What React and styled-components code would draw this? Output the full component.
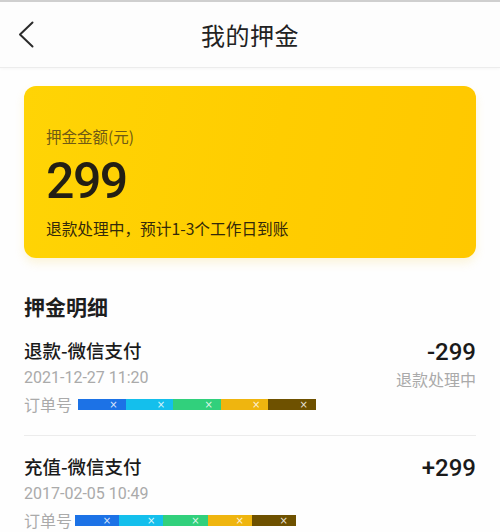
import React from 'react';
import styled, { createGlobalStyle } from 'styled-components';

const records = [
  {
    title: '退款-微信支付',
    amount: '-299',
    time: '2021-12-27 11:20',
    status: '退款处理中',
    segment: 47.6,
    barGap: 6,
  },
  {
    title: '充值-微信支付',
    amount: '+299',
    time: '2017-02-05 10:49',
    status: '',
    segment: 44.2,
    barGap: 3,
  },
];

const maskColors = ['#1c72e6', '#14bfec', '#31d07c', '#efb50f', '#6e5100'];

function MaskedOrder({ segment, gap }) {
  return (
    <Mask $gap={gap}>
      {maskColors.map(color => (
        <MaskPart key={color} $color={color} $width={segment}>
          ×
        </MaskPart>
      ))}
    </Mask>
  );
}

function App() {
  return (
    <Page>
      <GlobalStyle />
      <Header>
        <BackButton aria-label="返回">
          <svg width="16" height="27" viewBox="0 0 16 27" fill="none">
            <polyline
              points="14.5,1.5 2,13.5 14.5,25.5"
              stroke="#2b2b2b"
              strokeWidth="2"
              strokeLinecap="round"
              strokeLinejoin="round"
            />
          </svg>
        </BackButton>
        <Title>我的押金</Title>
      </Header>

      <Card>
        <CardLabel>押金金额(元)</CardLabel>
        <CardAmount>299</CardAmount>
        <CardNote>退款处理中，预计1-3个工作日到账</CardNote>
      </Card>

      <Section>
        <SectionTitle>押金明细</SectionTitle>
        {records.map((record, i) => (
          <Row key={record.time} $last={i === records.length - 1}>
            <RowMain>
              <RowTitle>{record.title}</RowTitle>
              <RowTime>{record.time}</RowTime>
              <OrderLine>
                订单号
                <MaskedOrder segment={record.segment} gap={record.barGap} />
              </OrderLine>
            </RowMain>
            <RowSide>
              <RowAmount>{record.amount}</RowAmount>
              {record.status && <RowStatus>{record.status}</RowStatus>}
            </RowSide>
          </Row>
        ))}
      </Section>
    </Page>
  );
}

const GlobalStyle = createGlobalStyle`
  html, body {
    margin: 0;
    padding: 0;
    background: #fefefe;
  }
  body {
    font-family: Roboto, "Noto Sans CJK SC", "Noto Sans", sans-serif;
    color: #222;
  }
`;

const Page = styled.div`
  width: 500px;
  height: 532px;
  overflow: hidden;
  background: #fefefe;
  border-top: 2px solid #cfcfcf;
  box-sizing: border-box;
`;

const Header = styled.div`
  position: relative;
  height: 65px;
  display: flex;
  align-items: center;
  justify-content: center;
  background: #fdfdfd;
  border-bottom: 1px solid #ececec;
  box-shadow: 0 1px 3px rgba(0, 0, 0, 0.03);
`;

const BackButton = styled.div`
  position: absolute;
  left: 18px;
  top: 19px;
  display: flex;
`;

const Title = styled.div`
  font-family: "Noto Sans CJK SC", sans-serif;
  font-size: 24px;
  line-height: 32px;
  color: #222;
  letter-spacing: 0.5px;
`;

const Card = styled.div`
  margin: 18px 24px 0;
  height: 172px;
  box-sizing: border-box;
  padding: 38px 22px 0;
  border-radius: 12px;
  background: linear-gradient(100deg, #ffd405 0%, #ffcd00 55%, #ffc800 100%);
  box-shadow: 0 5px 10px rgba(240, 200, 60, 0.18);
`;

const CardLabel = styled.div`
  font-family: "Noto Sans CJK SC", sans-serif;
  font-size: 15.5px;
  line-height: 24px;
  color: #6f5a14;
`;

const CardAmount = styled.div`
  font-family: Roboto, sans-serif;
  font-size: 50px;
  font-weight: 500;
  line-height: 54px;
  letter-spacing: -1.5px;
  color: #231f14;
  margin-top: 6px;
`;

const CardNote = styled.div`
  font-family: "Noto Sans CJK SC", sans-serif;
  font-size: 15.7px;
  line-height: 24px;
  color: #33290a;
  margin-top: 9px;
`;

const Section = styled.div`
  padding: 0 24px;
`;

const SectionTitle = styled.div`
  font-family: "Noto Sans CJK SC", sans-serif;
  font-size: 21px;
  font-weight: 700;
  line-height: 28px;
  color: #1e1e1e;
  margin-top: 34px;
`;

const Row = styled.div`
  display: flex;
  justify-content: space-between;
  align-items: flex-start;
  padding: 17px 0 19px;
  border-bottom: ${p => (p.$last ? 'none' : '1px solid #ececec')};
`;

const RowMain = styled.div`
  display: flex;
  flex-direction: column;
`;

const RowTitle = styled.div`
  font-family: "Noto Sans CJK SC", sans-serif;
  font-size: 18.5px;
  font-weight: 500;
  line-height: 27px;
  color: #1a1a1a;
`;

const RowTime = styled.div`
  font-family: Roboto, sans-serif;
  font-size: 16px;
  line-height: 28px;
  color: #aaaaaa;
`;

const OrderLine = styled.div`
  display: flex;
  align-items: center;
  font-family: "Noto Sans CJK SC", sans-serif;
  font-size: 16px;
  line-height: 24px;
  color: #aaaaaa;
`;

const Mask = styled.div`
  display: flex;
  height: 11px;
  margin-left: ${p => p.$gap}px;
`;

const MaskPart = styled.div`
  width: ${p => p.$width}px;
  height: 11px;
  background: ${p => p.$color};
  display: flex;
  align-items: center;
  justify-content: flex-end;
  padding-right: 8px;
  box-sizing: border-box;
  font-family: "DejaVu Sans", sans-serif;
  font-size: 10px;
  line-height: 11px;
  color: rgba(255, 255, 255, 0.85);
`;

const RowSide = styled.div`
  display: flex;
  flex-direction: column;
  align-items: flex-end;
`;

const RowAmount = styled.div`
  font-family: Roboto, sans-serif;
  font-size: 24px;
  font-weight: 500;
  line-height: 30px;
  color: #1a1a1a;
`;

const RowStatus = styled.div`
  font-family: "Noto Sans CJK SC", sans-serif;
  font-size: 16px;
  line-height: 24px;
  color: #aaaaaa;
`;

export default App;
